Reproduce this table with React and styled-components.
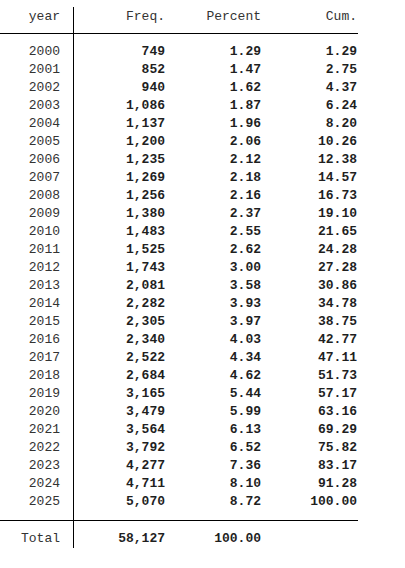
import React from "react";
import styled, { createGlobalStyle } from "styled-components";

const GlobalStyle = createGlobalStyle`
  body {
    margin: 0;
    background: #ffffff;
  }
`;

const rows = [
  ["2000", "749", "1.29", "1.29"],
  ["2001", "852", "1.47", "2.75"],
  ["2002", "940", "1.62", "4.37"],
  ["2003", "1,086", "1.87", "6.24"],
  ["2004", "1,137", "1.96", "8.20"],
  ["2005", "1,200", "2.06", "10.26"],
  ["2006", "1,235", "2.12", "12.38"],
  ["2007", "1,269", "2.18", "14.57"],
  ["2008", "1,256", "2.16", "16.73"],
  ["2009", "1,380", "2.37", "19.10"],
  ["2010", "1,483", "2.55", "21.65"],
  ["2011", "1,525", "2.62", "24.28"],
  ["2012", "1,743", "3.00", "27.28"],
  ["2013", "2,081", "3.58", "30.86"],
  ["2014", "2,282", "3.93", "34.78"],
  ["2015", "2,305", "3.97", "38.75"],
  ["2016", "2,340", "4.03", "42.77"],
  ["2017", "2,522", "4.34", "47.11"],
  ["2018", "2,684", "4.62", "51.73"],
  ["2019", "3,165", "5.44", "57.17"],
  ["2020", "3,479", "5.99", "63.16"],
  ["2021", "3,564", "6.13", "69.29"],
  ["2022", "3,792", "6.52", "75.82"],
  ["2023", "4,277", "7.36", "83.17"],
  ["2024", "4,711", "8.10", "91.28"],
  ["2025", "5,070", "8.72", "100.00"],
];

const Table = styled.div`
  width: 358px;
  margin-top: 7px;
  font-family: "Liberation Mono", "Courier New", monospace;
  font-size: 13px;
  color: #222;
`;

const Section = styled.div`
  display: grid;
  grid-template-columns: 74px 1fr;
  border-bottom: ${(p) => (p.$ruled ? "1px solid #000" : "none")};
`;

const Labels = styled.div`
  border-right: 1px solid #000;
  padding: ${(p) => p.$pad || "0"};
`;

const Values = styled.div`
  padding: ${(p) => p.$pad || "0"};
`;

const Row = styled.div`
  height: 18px;
  display: grid;
  grid-template-columns: 91px 96px 96px;
  align-items: center;
`;

const HeadRow = styled(Row)`
  height: 24px;
  padding-top: 2px;
  align-items: start;
  line-height: 16px;
`;

const Label = styled.div`
  height: 18px;
  display: flex;
  align-items: center;
  justify-content: flex-end;
  padding-right: 13px;
  color: #333;
`;

const HeadLabel = styled(Label)`
  height: 24px;
  padding-top: 2px;
  align-items: flex-start;
  line-height: 16px;
`;

const Cell = styled.div`
  text-align: right;
  font-weight: ${(p) => (p.$bold ? "bold" : "normal")};
  color: ${(p) => (p.$bold ? "#1f1f1f" : "#333")};
`;

function App() {
  return (
    <>
      <GlobalStyle />
      <Table>
        <Section $ruled>
          <Labels>
            <HeadLabel>year</HeadLabel>
          </Labels>
          <Values>
            <HeadRow>
              <Cell>Freq.</Cell>
              <Cell>Percent</Cell>
              <Cell>Cum.</Cell>
            </HeadRow>
          </Values>
        </Section>
        <Section $ruled>
          <Labels $pad="8px 0 10px">
            {rows.map((r) => (
              <Label key={r[0]}>{r[0]}</Label>
            ))}
          </Labels>
          <Values $pad="8px 0 10px">
            {rows.map((r) => (
              <Row key={r[0]}>
                <Cell $bold>{r[1]}</Cell>
                <Cell $bold>{r[2]}</Cell>
                <Cell $bold>{r[3]}</Cell>
              </Row>
            ))}
          </Values>
        </Section>
        <Section>
          <Labels $pad="8px 0 1px">
            <Label>Total</Label>
          </Labels>
          <Values $pad="8px 0 1px">
            <Row>
              <Cell $bold>58,127</Cell>
              <Cell $bold>100.00</Cell>
              <Cell />
            </Row>
          </Values>
        </Section>
      </Table>
    </>
  );
}

export default App;
